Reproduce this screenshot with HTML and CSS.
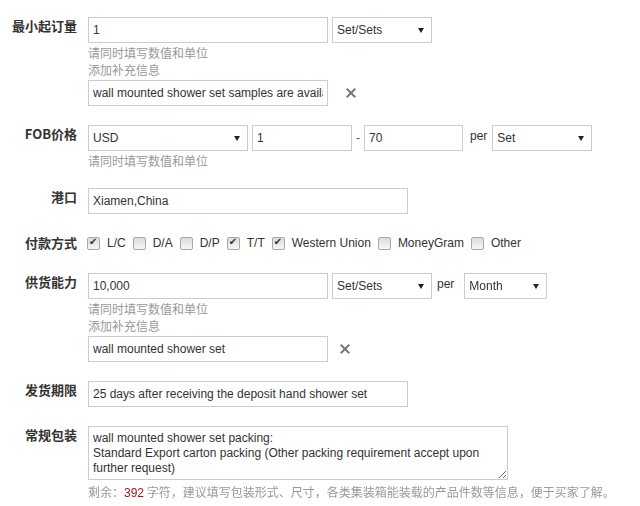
FILE: index.html
```html
<!DOCTYPE html>
<html lang="zh-CN">
<head>
    <meta charset="UTF-8">
    <title>产品交易信息</title>
    <link rel="stylesheet" href="styles.css">
</head>
<body>
    <div class="form">
        <!-- 最小起订量 -->
        <div class="row">
            <div class="label">最小起订量</div>
            <div class="field">
                <div class="line">
                    <input class="text w240" type="text" value="1">
                    <span class="select w100"><select><option>Set/Sets</option></select></span>
                </div>
                <div class="hint">请同时填写数值和单位</div>
                <div class="hint">添加补充信息</div>
                <div class="line extra">
                    <input class="text w240" type="text" value="wall mounted shower set samples are available">
                    <span class="del del-wide"></span>
                </div>
            </div>
        </div>

        <!-- FOB价格 -->
        <div class="row">
            <div class="label">FOB价格</div>
            <div class="field">
                <div class="line">
                    <span class="select w160"><select><option>USD</option></select></span>
                    <input class="text w100" type="text" value="1">
                    <span class="dash">-</span>
                    <input class="text w99" type="text" value="70">
                    <span class="per">per</span>
                    <span class="select w100"><select><option>Set</option></select></span>
                </div>
                <div class="hint">请同时填写数值和单位</div>
            </div>
        </div>

        <!-- 港口 -->
        <div class="row">
            <div class="label">港口</div>
            <div class="field">
                <input class="text w320" type="text" value="Xiamen,China">
            </div>
        </div>

        <!-- 付款方式 -->
        <div class="row pay">
            <div class="label">付款方式</div>
            <div class="field checks">
                <label><input type="checkbox" checked> L/C</label>
                <label><input type="checkbox"> D/A</label>
                <label><input type="checkbox"> D/P</label>
                <label><input type="checkbox" checked> T/T</label>
                <label><input type="checkbox" checked> Western Union</label>
                <label><input type="checkbox"> MoneyGram</label>
                <label><input type="checkbox"> Other</label>
            </div>
        </div>

        <!-- 供货能力 -->
        <div class="row">
            <div class="label">供货能力</div>
            <div class="field">
                <div class="line">
                    <input class="text w240" type="text" value="10,000">
                    <span class="select w100"><select><option>Set/Sets</option></select></span>
                    <span class="per per-wide">per</span>
                    <span class="select w83"><select><option>Month</option></select></span>
                </div>
                <div class="hint">请同时填写数值和单位</div>
                <div class="hint">添加补充信息</div>
                <div class="line extra">
                    <input class="text w240" type="text" value="wall mounted shower set">
                    <span class="del"></span>
                </div>
            </div>
        </div>

        <!-- 发货期限 -->
        <div class="row">
            <div class="label">发货期限</div>
            <div class="field">
                <input class="text w320" type="text" value="25 days after receiving the deposit hand shower set">
            </div>
        </div>

        <!-- 常规包装 -->
        <div class="row">
            <div class="label">常规包装</div>
            <div class="field">
                <textarea>wall mounted shower set packing:
Standard Export carton packing (Other packing requirement accept upon further request)</textarea>
                <div class="hint count">剩余：<em>392</em> 字符，建议填写包装形式、尺寸，各类集装箱能装载的产品件数等信息，便于买家了解。</div>
            </div>
        </div>
    </div>
</body>
</html>
```

FILE: styles.css
```css
* {
    margin: 0;
    padding: 0;
    box-sizing: border-box;
}
body {
    font-family: "Liberation Sans", Arial, "Noto Sans CJK SC", sans-serif;
    font-size: 12px;
    color: #333;
    background: #fff;
}
.form {
    padding-top: 17px;
}
.row {
    display: flex;
    margin-bottom: 19px;
}
.label {
    width: 77px;
    margin-right: 11px;
    flex-shrink: 0;
    text-align: right;
    font-family: "Noto Sans CJK SC", "Liberation Sans", sans-serif;
    font-size: 13px;
    font-weight: bold;
    line-height: 16px;
    padding-top: 1px;
    color: #333;
}
.line {
    display: flex;
    align-items: center;
    gap: 4px;
}
.line.extra {
    margin-top: 2px;
}
input.text,
.select select,
textarea {
    height: 26px;
    border: 1px solid #ccc;
    padding: 0 4px;
    font-family: "Liberation Sans", Arial, sans-serif;
    font-size: 12px;
    color: #333;
    background: #fff;
    outline: none;
}
.w240 { width: 240px; }
.w320 { width: 320px; }
.w160 { width: 160px; }
.w100 { width: 100px; }
.w99 { width: 99px; }
.w83 { width: 83px; }
.select {
    position: relative;
    display: block;
    flex-shrink: 0;
}
.select select {
    width: 100%;
    appearance: none;
    -webkit-appearance: none;
}
.select::after {
    content: "";
    position: absolute;
    right: 8px;
    top: 11px;
    border-left: 3px solid transparent;
    border-right: 3px solid transparent;
    border-top: 5px solid #222;
}
.dash {
    width: 4px;
    text-align: center;
    color: #555;
}
.per {
    margin: 0 1px 0 3px;
    align-self: flex-start;
    padding-top: 4px;
    color: #333;
}
.per-wide {
    margin: 0 6px 0 1px;
}
.hint {
    font-family: "Noto Sans CJK SC", "Liberation Sans", sans-serif;
    font-size: 12px;
    line-height: 17px;
    color: #999;
}
.line + .hint {
    padding-top: 1px;
}
.del {
    width: 10px;
    height: 10px;
    margin-left: 8px;
    position: relative;
}
.del-wide {
    margin-left: 14px;
}
.del::before,
.del::after {
    content: "";
    position: absolute;
    left: -1px;
    top: 4px;
    width: 12px;
    height: 2px;
    background: #777;
    transform: rotate(45deg);
}
.del::after {
    transform: rotate(-45deg);
}
.pay {
    margin-top: 1px;
    margin-bottom: 20px;
}
.pay .label {
    padding-top: 2px;
}
.checks {
    display: flex;
    align-items: center;
    height: 20px;
    margin-left: -1px;
}
.checks label {
    display: flex;
    align-items: center;
    margin-right: 7px;
    color: #333;
}
.checks input {
    appearance: none;
    -webkit-appearance: none;
    width: 13px;
    height: 13px;
    margin-right: 7px;
    border: 1px solid #a8a8a8;
    border-radius: 2px;
    background: linear-gradient(#dcdcdc, #f6f6f6);
    position: relative;
}
.checks input:checked::after {
    content: "\2714";
    position: absolute;
    left: 1px;
    top: -2px;
    font-family: "DejaVu Sans", sans-serif;
    font-size: 10px;
    color: #333;
}
textarea {
    display: block;
    width: 420px;
    height: 54px;
    padding: 4px 4px;
    line-height: 15px;
    resize: both;
}
.count {
    margin-top: 3px;
}
.count em {
    font-style: normal;
    font-family: "Liberation Sans", Arial, sans-serif;
    color: #b01010;
}
```
